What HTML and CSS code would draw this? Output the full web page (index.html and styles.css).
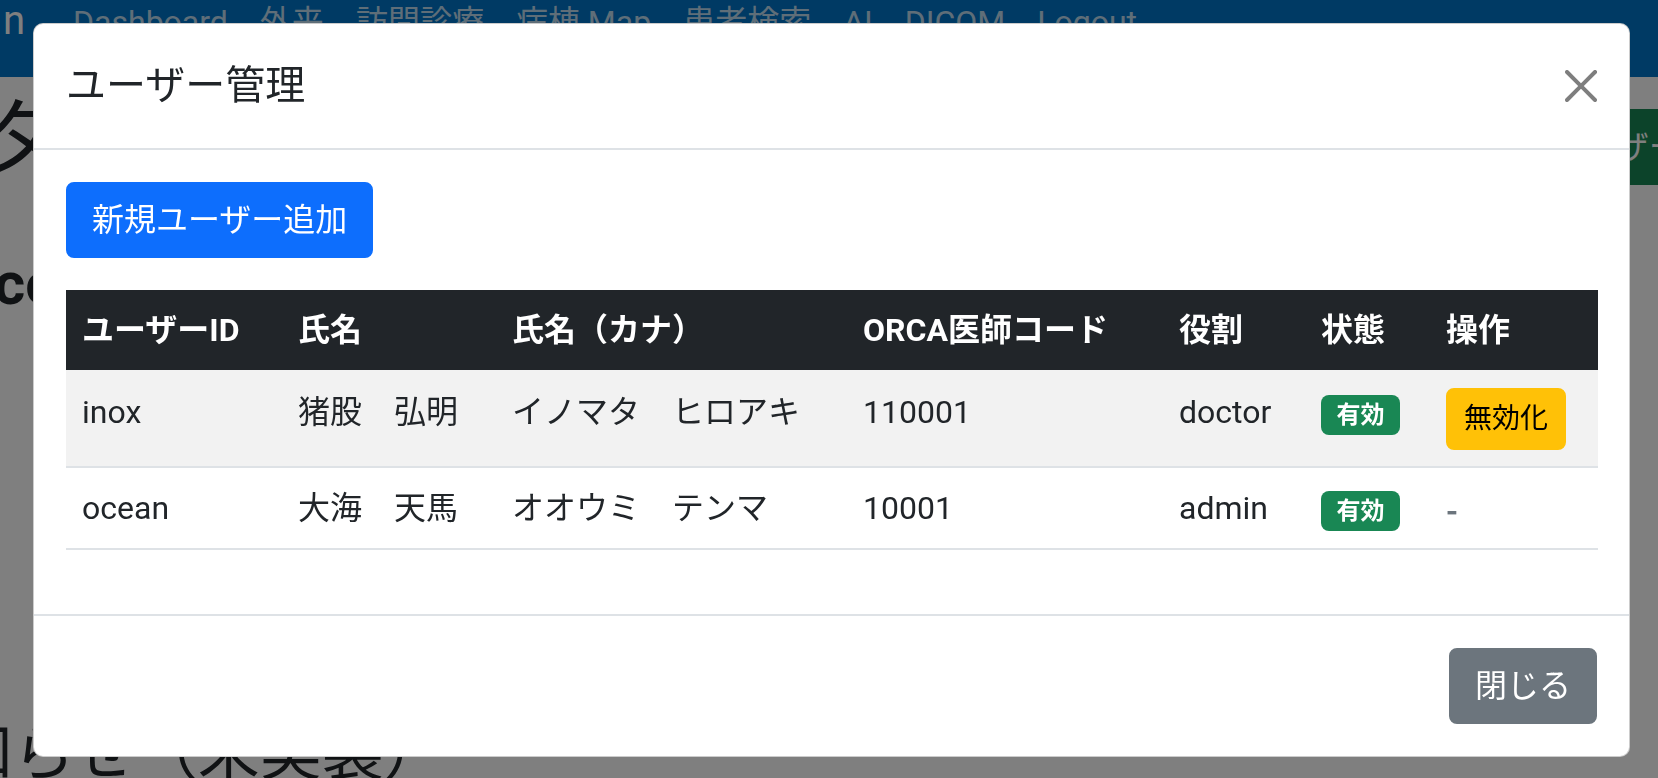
FILE: index.html
```html
<!DOCTYPE html>
<html lang="ja">
<head>
<meta charset="utf-8">
<title>ユーザー管理</title>
<link rel="stylesheet" href="styles.css">
</head>
<body>
<div class="page">
  <nav class="navbar">
    <span class="brand">n</span>
    <ul class="nav">
      <li><a class="nav-link" href="#">Dashboard</a></li>
      <li><a class="nav-link" href="#">外来</a></li>
      <li><a class="nav-link" href="#">訪問診療</a></li>
      <li><a class="nav-link" href="#">病棟 Map</a></li>
      <li><a class="nav-link" href="#">患者検索</a></li>
      <li><a class="nav-link" href="#">AI</a></li>
      <li><a class="nav-link" href="#">DICOM</a></li>
      <li><a class="nav-link" href="#">Logout</a></li>
    </ul>
  </nav>
  <main class="content">
    <div class="page-head">
      <h1 class="page-title">タ</h1>
      <button class="btn btn-success head-btn" type="button">ユーザー管理</button>
    </div>
    <h3 class="section-title">co</h3>
    <h2 class="notice-title">お知らせ（未実装）</h2>
  </main>
</div>

<div class="backdrop"></div>

<div class="modal">
  <div class="modal-dialog">
    <div class="modal-content">
      <div class="modal-header">
        <h5 class="modal-title">ユーザー管理</h5>
        <button class="btn-close" type="button" aria-label="Close">
          <svg viewBox="0 0 16 16" aria-hidden="true"><path d="M.293.293a1 1 0 0 1 1.414 0L8 6.586 14.293.293a1 1 0 1 1 1.414 1.414L9.414 8l6.293 6.293a1 1 0 0 1-1.414 1.414L8 9.414l-6.293 6.293a1 1 0 0 1-1.414-1.414L6.586 8 .293 1.707a1 1 0 0 1 0-1.414z"/></svg>
        </button>
      </div>
      <div class="modal-body">
        <div class="toolbar">
          <button class="btn btn-primary" type="button">新規ユーザー追加</button>
        </div>
        <table class="table">
          <thead>
            <tr>
              <th class="c-id">ユーザーID</th>
              <th class="c-name">氏名</th>
              <th class="c-kana">氏名（カナ）</th>
              <th class="c-code">ORCA医師コード</th>
              <th class="c-role">役割</th>
              <th class="c-state">状態</th>
              <th class="c-op">操作</th>
            </tr>
          </thead>
          <tbody>
            <tr class="striped action-row">
              <td>inox</td>
              <td>猪股　弘明</td>
              <td>イノマタ　ヒロアキ</td>
              <td>110001</td>
              <td>doctor</td>
              <td><span class="badge">有効</span></td>
              <td><button class="btn btn-sm btn-warning" type="button">無効化</button></td>
            </tr>
            <tr>
              <td>ocean</td>
              <td>大海　天馬</td>
              <td>オオウミ　テンマ</td>
              <td>10001</td>
              <td>admin</td>
              <td><span class="badge">有効</span></td>
              <td><span class="text-muted dash">-</span></td>
            </tr>
          </tbody>
        </table>
      </div>
      <div class="modal-footer">
        <button class="btn btn-secondary" type="button">閉じる</button>
      </div>
    </div>
  </div>
</div>
</body>
</html>
```

FILE: styles.css
```css
* {
  box-sizing: border-box;
}

html,
body {
  margin: 0;
  padding: 0;
}

body {
  width: 1658px;
  height: 778px;
  overflow: hidden;
  font-family: Roboto, "Noto Sans CJK JP", sans-serif;
  font-size: 32px;
  line-height: 1.5;
  color: #212529;
  background: #fff;
}

/* ---------- background page ---------- */

.navbar {
  display: flex;
  align-items: flex-start;
  height: 77px;
  padding-left: 3px;
  background: #0075c9;
}

.brand {
  font-size: 40px;
  line-height: 60px;
  color: #fff;
  margin: -9px 32px 0 0;
}

.nav {
  display: flex;
  list-style: none;
  margin: -2px 0 0;
  padding: 0;
}

.nav-link {
  display: block;
  padding: 0 16px;
  font-size: 32px;
  line-height: 48px;
  color: rgba(255, 255, 255, 0.75);
  text-decoration: none;
  white-space: nowrap;
}

.content {
  width: 1819px;
  margin-left: -48px;
}

.page-head {
  display: flex;
  justify-content: space-between;
  align-items: flex-start;
}

.page-title {
  margin: 13px 0 0 26px;
  font-size: 84px;
  line-height: 1.2;
  font-weight: 400;
}

.head-btn {
  margin-top: 32px;
  white-space: nowrap;
}

.section-title {
  margin: 57px 0 0 42px;
  font-size: 60px;
  line-height: 1.2;
  font-weight: 700;
}

.notice-title {
  margin: 397px 0 0 -63px;
  font-size: 62px;
  line-height: 1.2;
  font-weight: 400;
  white-space: nowrap;
}

/* ---------- buttons ---------- */

.btn {
  display: inline-block;
  font-family: inherit;
  font-size: 32px;
  line-height: 48px;
  font-weight: 400;
  padding: 12px 24px;
  border: 2px solid transparent;
  border-radius: 8px;
  color: #fff;
  cursor: pointer;
}

.btn-primary {
  background: #0d6efd;
  border-color: #0d6efd;
}

.btn-secondary {
  background: #6c757d;
  border-color: #6c757d;
}

.btn-success {
  background: #198754;
  border-color: #198754;
}

.btn-warning {
  background: #ffc107;
  border-color: #ffc107;
  color: #000;
}

.btn-sm {
  font-size: 28px;
  line-height: 42px;
  padding: 8px 16px;
}

/* ---------- modal ---------- */

.backdrop {
  position: fixed;
  inset: 0;
  background: rgba(0, 0, 0, 0.5);
}

.modal {
  position: fixed;
  inset: 0;
}

.modal-dialog {
  width: 1597px;
  margin: 23px 0 0 33px;
}

.modal-content {
  display: flex;
  flex-direction: column;
  background: #fff;
  border: 1px solid rgba(0, 0, 0, 0.2);
  border-radius: 10px;
}

.modal-header {
  display: flex;
  align-items: center;
  padding: 32px;
  border-bottom: 2px solid #dee2e6;
}

.modal-title {
  margin: 0;
  font-size: 40px;
  line-height: 60px;
  font-weight: 400;
}

.btn-close {
  display: flex;
  width: 64px;
  height: 64px;
  padding: 16px;
  margin: -16px -16px -16px auto;
  border: 0;
  background: transparent;
  opacity: 0.5;
  cursor: pointer;
}

.btn-close svg {
  display: block;
  width: 32px;
  height: 32px;
  fill: #000;
}

.modal-body {
  padding: 32px;
}

.toolbar {
  display: flex;
  margin-bottom: 32px;
}

/* ---------- table ---------- */

.table {
  width: 100%;
  border-collapse: collapse;
  table-layout: fixed;
  margin-bottom: 32px;
}

.table th,
.table td {
  padding: 16px;
  text-align: left;
  vertical-align: top;
  border-bottom: 2px solid #dee2e6;
  white-space: nowrap;
}

.table thead th {
  background: #212529;
  color: #fff;
  font-weight: 700;
  border-bottom: 0;
}

.table .striped td {
  background: #f2f2f2;
}

.table .action-row td {
  padding-top: 18px;
  padding-bottom: 16px;
}

.action-row .btn {
  vertical-align: top;
}

.c-id { width: 216px; }
.c-name { width: 214px; }
.c-kana { width: 351px; }
.c-code { width: 316px; }
.c-role { width: 142px; }
.c-state { width: 125px; }
.c-op { width: 168px; }

.badge {
  display: inline-block;
  vertical-align: top;
  margin-top: 7px;
  padding: 8px 15.6px;
  font-size: 24px;
  line-height: 24px;
  font-weight: 700;
  color: #fff;
  background: #198754;
  border-radius: 8px;
}

.text-muted {
  color: #6c757d;
}

.dash {
  display: inline-block;
  vertical-align: top;
  line-height: 48px;
  font-family: "Noto Sans CJK JP", sans-serif;
  font-weight: 700;
}

/* ---------- footer ---------- */

.modal-footer {
  display: flex;
  justify-content: flex-end;
  align-items: center;
  padding: 24px;
  border-top: 2px solid #dee2e6;
}

.modal-footer .btn {
  margin: 8px;
}
```
